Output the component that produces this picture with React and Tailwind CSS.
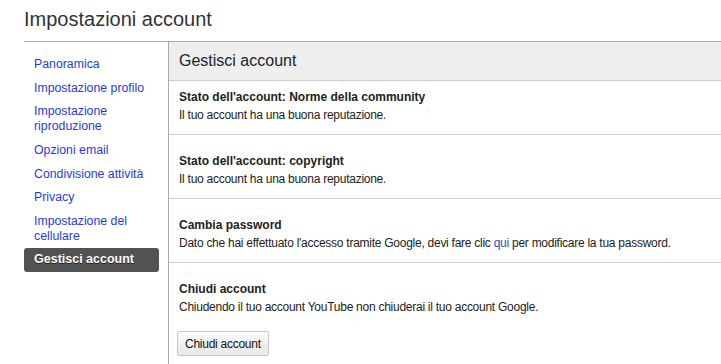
import React from 'react';

const links = [
  'Panoramica',
  'Impostazione profilo',
  ['Impostazione', 'riproduzione'],
  'Opzioni email',
  'Condivisione attività',
  'Privacy',
  ['Impostazione del', 'cellulare'],
];

function Section({ title, first, children }) {
  return (
    <div
      className={`px-[10px] border-b border-[#d0d0d0] pb-[10px] ${
        first ? 'pt-[7px]' : 'pt-[17px]'
      }`}
    >
      <div className="font-bold text-[12px] leading-[18px] text-[#222]">{title}</div>
      <div className="text-[12px] tracking-[-0.26px] leading-[18px] text-[#222]">{children}</div>
    </div>
  );
}

export default function App() {
  return (
    <div className="w-[721px] h-[364px] overflow-hidden bg-white font-['Liberation_Sans',Arial,sans-serif]">
      <h1 className="h-[41px] pl-6 pt-[6px] text-[20px] leading-[26px] text-[#333]">
        Impostazioni account
      </h1>
      <div className="ml-6 flex border-t border-[#aaa] h-[323px]">
        <nav className="w-[144px] shrink-0 pt-[15px] pr-[9px] flex flex-col gap-[8.7px] text-[12.3px] leading-[15px] whitespace-nowrap">
          {links.map((l, i) => (
            <a key={i} href="#" className="px-[10px] text-[#1f3be0]">
              {Array.isArray(l) ? (
                <>
                  {l[0]}
                  <br />
                  {l[1]}
                </>
              ) : (
                l
              )}
            </a>
          ))}
          <div className="mt-[-5px] h-[24px] rounded-[3px] bg-[#525252] px-[10px] flex items-center font-bold text-[12.5px] text-white [text-shadow:0_1px_0_#222]">
            Gestisci account
          </div>
        </nav>
        <div className="flex-1 border-l border-[#aaa]">
          <div className="h-[39px] bg-[#eeeeee] border-b border-[#cccccc] px-[10px] flex items-center text-[16px] text-[#222]">
            Gestisci account
          </div>
          <Section first title="Stato dell'account: Norme della community">
            Il tuo account ha una buona reputazione.
          </Section>
          <Section title="Stato dell'account: copyright">
            Il tuo account ha una buona reputazione.
          </Section>
          <Section title="Cambia password">
            Dato che hai effettuato l'accesso tramite Google, devi fare clic{' '}
            <a href="#" className="text-[#2a4fc4]">qui</a> per modificare la tua password.
          </Section>
          <div className="px-[10px] pt-[17px]">
            <div className="font-bold text-[12px] leading-[18px] text-[#222]">Chiudi account</div>
            <div className="text-[12px] tracking-[-0.26px] leading-[18px] text-[#222]">
              Chiudendo il tuo account YouTube non chiuderai il tuo account Google.
            </div>
            <button className="ml-[-2px] mt-[15px] h-[25px] px-[7px] rounded-[2px] border border-[#c8c8c8] bg-gradient-to-b from-[#fbfbfb] to-[#e8e8e8] text-[12px] tracking-[-0.26px] text-[#111]">
              Chiudi account
            </button>
          </div>
        </div>
      </div>
    </div>
  );
}
